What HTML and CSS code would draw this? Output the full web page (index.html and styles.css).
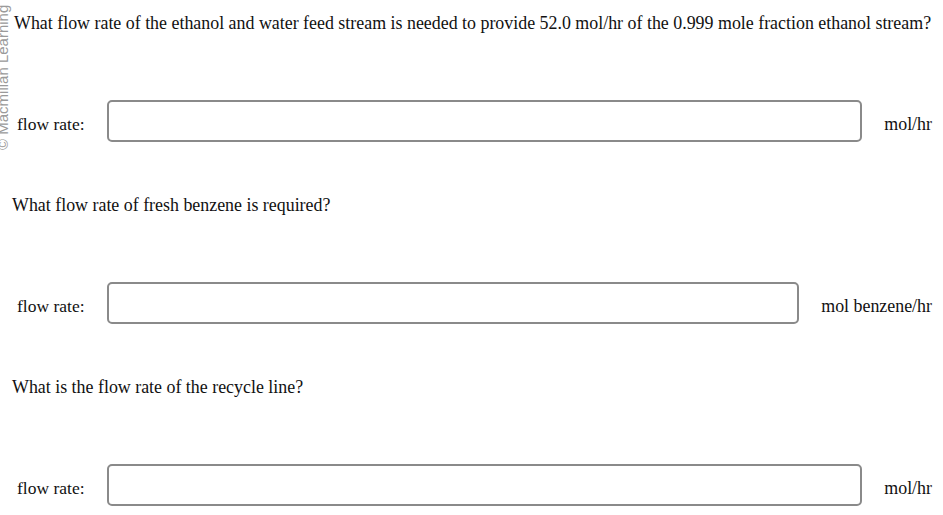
FILE: index.html
```html
<!DOCTYPE html>
<html>
<head>
<meta charset="utf-8">
<link rel="stylesheet" href="styles.css">
</head>
<body>
<div class="watermark">© Macmillan Learning</div>
<div class="page">
  <p class="question q-first">What flow rate of the ethanol and water feed stream is needed to provide 52.0 mol/hr of the 0.999 mole fraction ethanol stream?</p>
  <div class="row">
    <label class="label">flow rate:</label>
    <input class="field" type="text">
    <span class="unit">mol/hr</span>
  </div>
  <p class="question">What flow rate of fresh benzene is required?</p>
  <div class="row">
    <label class="label">flow rate:</label>
    <input class="field" type="text">
    <span class="unit">mol benzene/hr</span>
  </div>
  <p class="question">What is the flow rate of the recycle line?</p>
  <div class="row">
    <label class="label">flow rate:</label>
    <input class="field" type="text">
    <span class="unit">mol/hr</span>
  </div>
</div>
</body>
</html>
```
FILE: styles.css
```css
html, body {
  margin: 0;
  padding: 0;
  background: #ffffff;
}
body {
  font-family: "Liberation Serif", "Times New Roman", serif;
  font-size: 17.5px;
  color: #111;
  width: 943px;
  height: 515px;
  overflow: hidden;
  position: relative;
}
.watermark {
  position: absolute;
  left: 0;
  top: 0;
  font-family: "Liberation Sans", Arial, sans-serif;
  font-size: 15px;
  line-height: 15px;
  color: #9a9a9a;
  white-space: nowrap;
  transform-origin: 0 0;
  transform: translate(-5px, 150px) rotate(-90deg);
}
.page {
  padding: 12px 11px 0 0;
}
.question {
  margin: 52px 0 0 12px;
  font-size: 17.9px;
  line-height: 22px;
  height: 22px;
  white-space: nowrap;
}
.question.q-first {
  margin-top: 0;
  margin-left: 14px;
}
.row {
  display: flex;
  align-items: center;
  margin-top: 66px;
  padding-left: 17px;
  height: 42px;
}
.label {
  flex: none;
  width: 90px;
  padding-top: 6px;
}
.field {
  flex: 1;
  min-width: 0;
  box-sizing: border-box;
  height: 42px;
  border: 2px solid #8a8a8a;
  border-radius: 5px;
  background: #fff;
  margin: 0;
  padding: 0 8px;
  font: inherit;
}
.unit {
  flex: none;
  margin-left: 22px;
  padding-top: 6px;
  font-size: 17.9px;
  white-space: nowrap;
}
```
